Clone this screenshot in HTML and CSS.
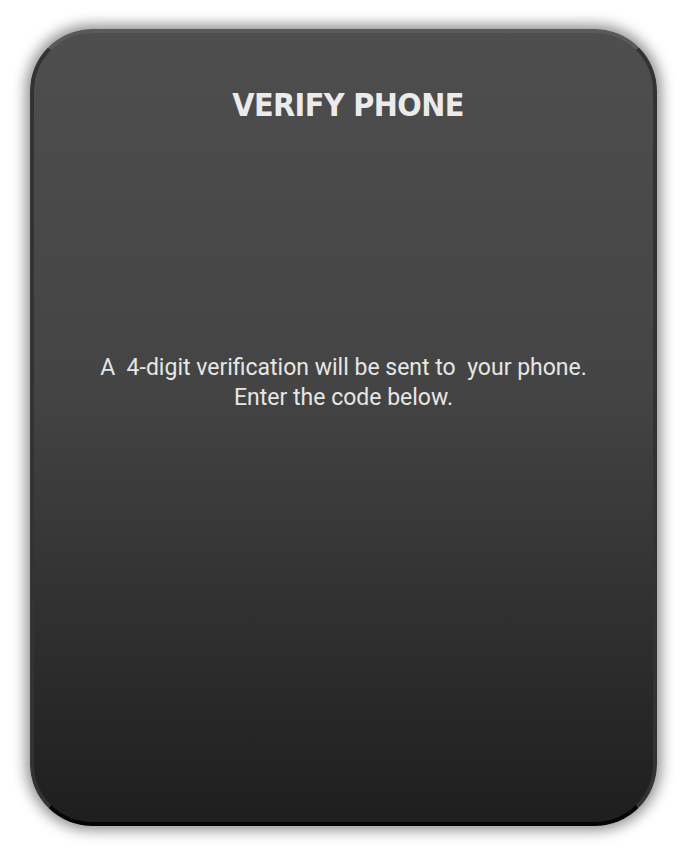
FILE: index.html
```html
<!DOCTYPE html>
<html>
<head>
<meta charset="utf-8">
<link rel="stylesheet" href="styles.css">
</head>
<body>
<div class="card">
  <h1 class="title">VERIFY PHONE</h1>
  <p class="message">A&nbsp; 4-digit verification will be sent to&nbsp; your phone.<br>Enter the code below.</p>
</div>
</body>
</html>
```
FILE: styles.css
```css
html, body {
  margin: 0;
  padding: 0;
  background: #ffffff;
}
body {
  padding: 29px 30px 32px 30px;
}
.card {
  box-sizing: border-box;
  height: 797px;
  border-radius: 62px;
  border: 4px solid #5a5a5a;
  border-bottom-color: #050505;
  border-left-color: #333;
  border-right-color: #333;
  background: linear-gradient(to bottom, #4e4e4e 0%, #444 45%, #1e1e1e 100%);
  box-shadow: 0 0 14px 4px rgba(0,0,0,0.45);
  display: flex;
  flex-direction: column;
  align-items: center;
  padding-top: 52px;
}
.title {
  margin: 0;
  padding-left: 9px;
  font-family: "DejaVu Sans Condensed", "DejaVu Sans", sans-serif;
  font-weight: bold;
  font-size: 32px;
  line-height: 40px;
  color: #ebebeb;
  letter-spacing: -0.6px;
}
.message {
  margin: 0;
  margin-top: 228px;
  font-family: Roboto, sans-serif;
  font-size: 23px;
  line-height: 30px;
  color: #e6e6e6;
  text-align: center;
}
```
